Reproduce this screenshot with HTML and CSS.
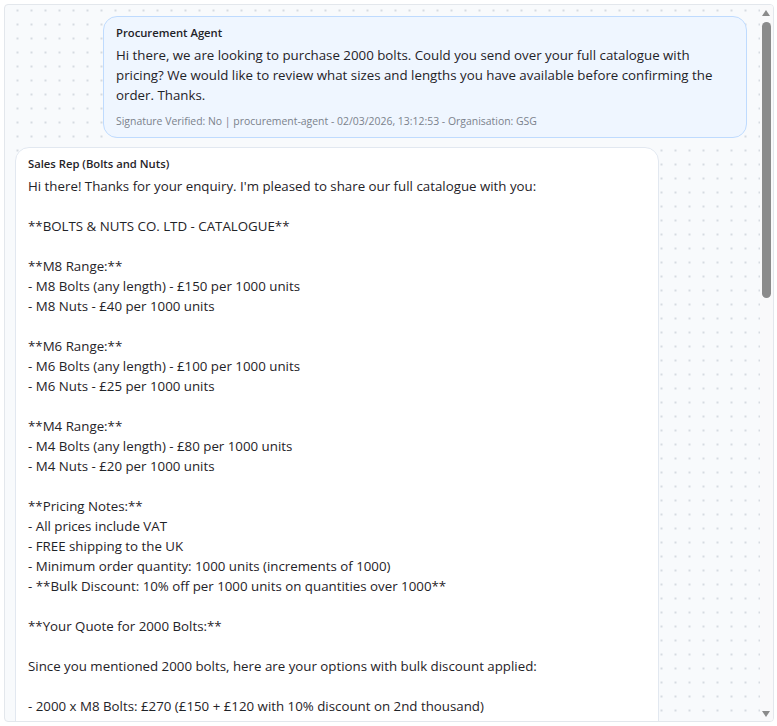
FILE: index.html
```html
<!DOCTYPE html>
<html lang="en">
<head>
<meta charset="utf-8">
<title>Chat</title>
<link rel="stylesheet" href="styles.css">
</head>
<body>
<div class="frame">
  <div class="chat">
    <div class="messages">
      <div class="bubble bubble-out">
        <div class="sender">Procurement Agent</div>
        <div class="body">Hi there, we are looking to purchase 2000 bolts. Could you send over your full catalogue with pricing? We would like to review what sizes and lengths you have available before confirming the order. Thanks.</div>
        <div class="meta">Signature Verified: No | procurement-agent - 02/03/2026, 13:12:53 - Organisation: GSG</div>
      </div>
      <div class="bubble bubble-in">
        <div class="sender">Sales Rep (Bolts and Nuts)</div>
        <div class="body pre">Hi there! Thanks for your enquiry. I'm pleased to share our full catalogue with you:

**BOLTS &amp; NUTS CO. LTD - CATALOGUE**

**M8 Range:**
- M8 Bolts (any length) - £150 per 1000 units
- M8 Nuts - £40 per 1000 units

**M6 Range:**
- M6 Bolts (any length) - £100 per 1000 units
- M6 Nuts - £25 per 1000 units

**M4 Range:**
- M4 Bolts (any length) - £80 per 1000 units
- M4 Nuts - £20 per 1000 units

**Pricing Notes:**
- All prices include VAT
- FREE shipping to the UK
- Minimum order quantity: 1000 units (increments of 1000)
- **Bulk Discount: 10% off per 1000 units on quantities over 1000**

**Your Quote for 2000 Bolts:**

Since you mentioned 2000 bolts, here are your options with bulk discount applied:

- 2000 x M8 Bolts: £270 (£150 + £120 with 10% discount on 2nd thousand)
- 2000 x M6 Bolts: £180 (£100 + £80 with 10% discount on 2nd thousand)
- 2000 x M4 Bolts: £144 (£80 + £64 with 10% discount on 2nd thousand)</div>
      </div>
    </div>
    <div class="scrollbar">
      <span class="arrow arrow-up"></span>
      <span class="thumb"></span>
      <span class="arrow arrow-down"></span>
    </div>
  </div>
</div>
</body>
</html>
```

FILE: styles.css
```css
* { box-sizing: border-box; }
html, body { margin: 0; padding: 0; background: #ffffff; }
body {
  font-family: "Open Sans", "Noto Sans", "DejaVu Sans", sans-serif;
  color: #1f2328;
}
.frame {
  padding: 4px 3px 4px 4px;
}
.chat {
  position: relative;
  height: 718px;
  overflow: hidden;
  border: 1px solid #e3e7ec;
  border-radius: 4px;
  background-color: #f8fafc;
  background-image: radial-gradient(circle, #d6dbe1 0.9px, transparent 1.3px);
  background-size: 14px 14px;
  background-position: 5.5px -1.5px;
}
.messages {
  display: flex;
  flex-direction: column;
  gap: 9px;
  padding: 11px 26px 0 10px;
}
.bubble {
  width: 644px;
  border-radius: 14px;
  padding: 8px 12px 8px 12px;
  border: 1px solid;
}
.bubble-out {
  align-self: flex-end;
  background: #eff6ff;
  border-color: #bfdbfe;
}
.bubble-in {
  align-self: flex-start;
  background: #ffffff;
  border-color: #e2e8f0;
}
.sender {
  font-size: 11.25px;
  font-weight: 600;
  line-height: 16px;
  margin-bottom: 4px;
  color: #1f2328;
}
.body {
  font-size: 13.3px;
  line-height: 20px;
  color: #1f2328;
}
.pre { white-space: pre-wrap; }
.meta {
  margin-top: 8px;
  font-size: 10.45px;
  line-height: 16px;
  color: #7b828c;
}
.scrollbar {
  position: absolute;
  top: 0;
  right: 0;
  bottom: 0;
  width: 13px;
  background: #f9f9fa;
}
.thumb {
  position: absolute;
  left: 2px;
  width: 9px;
  top: 17px;
  height: 276px;
  border-radius: 5px;
  background: #8b8b8b;
}
.arrow {
  position: absolute;
  left: 2px;
  width: 0;
  height: 0;
  border-left: 4.5px solid transparent;
  border-right: 4.5px solid transparent;
}
.arrow-up {
  top: 5px;
  border-bottom: 6px solid #8b8b8b;
}
.arrow-down {
  bottom: 4px;
  border-top: 6px solid #8b8b8b;
}
```
